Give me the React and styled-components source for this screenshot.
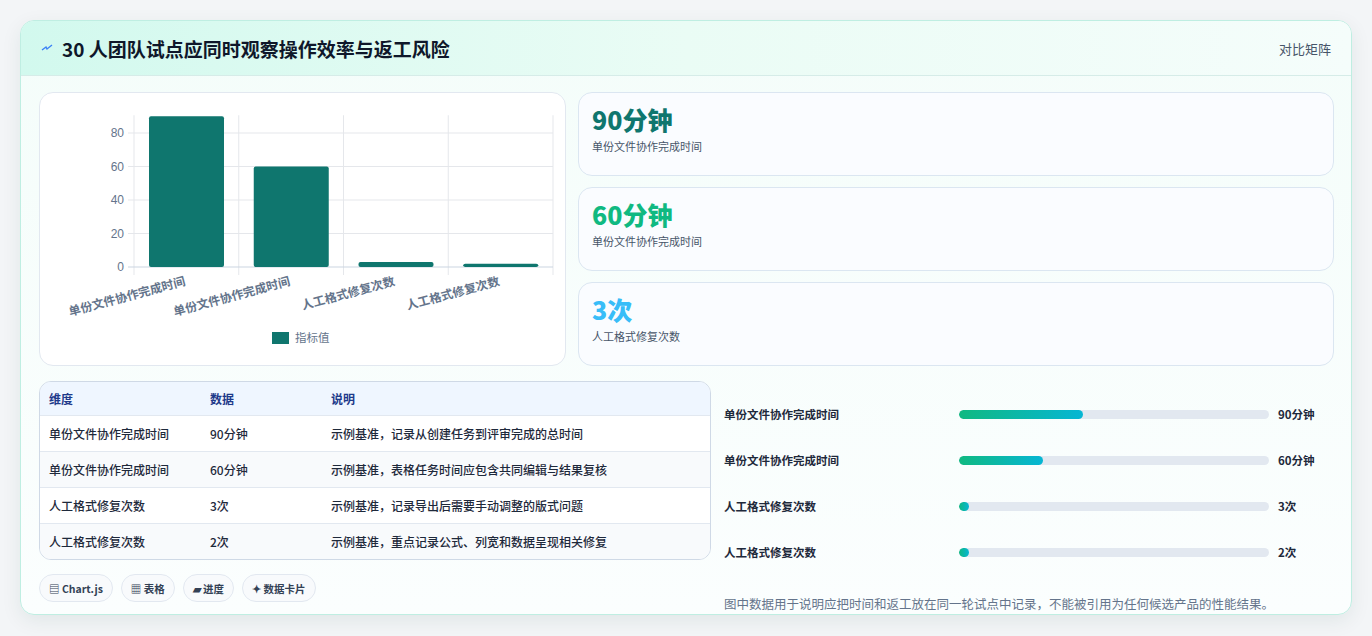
import React from "react";
import styled, { createGlobalStyle } from "styled-components";

const G = createGlobalStyle`
  body{margin:0;background:#f3f5f7;font-family:"Noto Sans CJK SC","Noto Sans",sans-serif;}
`;
const Page = styled.div`padding:20px 20px 21px 20px;width:1372px;box-sizing:border-box;`;
const Card = styled.div`
  width:1332px;height:595px;box-sizing:border-box;border:1px solid #bfeee2;border-radius:14px;
  background:linear-gradient(180deg,#f4fdfa,#fbfefe);overflow:hidden;box-shadow:0 6px 20px rgba(15,60,50,.08);
`;
const Head = styled.div`
  height:55px;box-sizing:border-box;display:flex;align-items:center;justify-content:space-between;
  padding:0 20px 0 20px;background:linear-gradient(90deg,#d2f9ee,#eafcf5 50%,#f5fdfb);border-bottom:1px solid #d6ece8;
`;
const Title = styled.h1`margin:0;font-size:19px;font-weight:700;color:#0f172a;display:flex;align-items:center;gap:9px;`;
const Side = styled.span`font-size:13px;color:#475569;`;
const Body = styled.div`padding:16px 18px 0 18px;display:flex;flex-direction:column;gap:15px;`;
const Top = styled.div`display:grid;grid-template-columns:527px 756px;gap:12px;`;
const ChartBox = styled.div`height:274px;box-sizing:border-box;border:1px solid #e2e8f0;border-radius:14px;background:#fff;`;
const Stats = styled.div`display:flex;flex-direction:column;gap:11px;`;
const Stat = styled.div`height:84px;box-sizing:border-box;border:1px solid #dbe6f1;border-radius:14px;background:#fafcff;padding:8px 13px;`;
const Big = styled.div`font-size:25px;font-weight:800;color:${p=>p.c};line-height:36px;`;
const Small = styled.div`font-size:11px;color:#475569;margin-top:1px;`;
const Bottom = styled.div`display:grid;grid-template-columns:672px 1fr;gap:13px;`;
const Left = styled.div`display:flex;flex-direction:column;gap:14px;`;
const Table = styled.div`border:1px solid #cfd9e6;border-radius:12px;overflow:hidden;background:#fff;`;
const Row = styled.div`
  display:grid;grid-template-columns:161px 121px 1fr;height:${p=>p.h?33:35}px;align-items:center;padding-left:9px;
  font-size:12px;color:${p=>p.h?"#1e3a8a":"#1e293b"};font-weight:${p=>p.h?600:500};
  background:${p=>p.h?"#eff6ff":p.alt?"#f8fafc":"#fff"};border-top:${p=>p.h?"none":"1px solid #e2e8f0"};
`;
const Chips = styled.div`display:flex;gap:8px;`;
const Chip = styled.span`height:28px;box-sizing:border-box;padding:0 9px;border:1px solid #e2e8f0;border-radius:14px;background:#f8fafc;font-size:10.5px;font-weight:600;color:#334155;display:flex;align-items:center;gap:3px;`;
const Right = styled.div`display:flex;flex-direction:column;padding-top:10px;`;
const PRow = styled.div`display:grid;grid-template-columns:226px 310px 1fr;align-items:center;height:46px;column-gap:9px;`;
const PLabel = styled.span`font-size:11.5px;font-weight:600;color:#1e293b;`;
const Track = styled.div`height:9px;border-radius:5px;background:#e2e8f0;overflow:hidden;`;
const Fill = styled.div`height:100%;border-radius:5px;background:linear-gradient(90deg,#10b981,#06b6d4);min-width:10px;`;
const PVal = styled.span`font-size:11.5px;font-weight:700;color:#1e293b;`;
const Note = styled.p`margin:19px 0 0;font-size:12.5px;color:#64748b;`;

const y = v => 266 - 92 - v * 1.675;
function Chart() {
  const x0 = 94, w = 104.75;
  const vals = [90, 60, 3, 2];
  const labels = ["单份文件协作完成时间","单份文件协作完成时间","人工格式修复次数","人工格式修复次数"];
  return (
    <svg width="525" height="272" style={{display:"block"}}>
      {[0,1,2,3,4].map(i=><line key={i} x1={x0+i*w} x2={x0+i*w} y1={y(90)-1} y2={y(0)+8} stroke="#e5e7eb"/>)}
      {[0,20,40,60,80].map(v=><g key={v}>
        <line x1={x0-6} x2={x0+4*w} y1={y(v)} y2={y(v)} stroke={v?"#e5e7eb":"#cbd5e1"}/>
        <text x={x0-10} y={y(v)+4} textAnchor="end" fontSize="12" fill="#64748b" fontFamily="Liberation Sans">{v}</text>
      </g>)}
      {vals.map((v,i)=><rect key={i} x={x0+i*w+15} y={y(v)} width={75} height={v*1.675} rx="2" fill="#0f766e"/>)}
      {labels.map((l,i)=><text key={i} transform={`translate(${x0+i*w+52},${y(0)+18}) rotate(-15)`} textAnchor="end" fontSize="12" fontWeight="600" fill="#64748b">{l}</text>)}
      <rect x="232" y="239" width="17" height="12" fill="#0f766e"/>
      <text x="255" y="249" fontSize="11.5" fill="#64748b">指标值</text>
    </svg>
  );
}

const rows = [
  ["单份文件协作完成时间","90分钟","示例基准，记录从创建任务到评审完成的总时间"],
  ["单份文件协作完成时间","60分钟","示例基准，表格任务时间应包含共同编辑与结果复核"],
  ["人工格式修复次数","3次","示例基准，记录导出后需要手动调整的版式问题"],
  ["人工格式修复次数","2次","示例基准，重点记录公式、列宽和数据呈现相关修复"],
];
const prog = [["单份文件协作完成时间",40,"90分钟"],["单份文件协作完成时间",27,"60分钟"],["人工格式修复次数",3,"3次"],["人工格式修复次数",2,"2次"]];

export default function App(){
  return (<Page><G/><Card>
    <Head>
      <Title><svg width="12" height="10" viewBox="0 0 12 10"><path d="M1 7 L5 4 L6 6 L11 2" stroke="#3b82f6" strokeWidth="1.4" fill="none"/></svg>30 人团队试点应同时观察操作效率与返工风险</Title>
      <Side>对比矩阵</Side>
    </Head>
    <Body>
      <Top>
        <ChartBox><Chart/></ChartBox>
        <Stats>
          <Stat><Big c="#0f766e">90分钟</Big><Small>单份文件协作完成时间</Small></Stat>
          <Stat><Big c="#10b981">60分钟</Big><Small>单份文件协作完成时间</Small></Stat>
          <Stat><Big c="#38bdf8">3次</Big><Small>人工格式修复次数</Small></Stat>
        </Stats>
      </Top>
      <Bottom>
        <Left>
          <Table>
            <Row h><span>维度</span><span>数据</span><span>说明</span></Row>
            {rows.map((r,i)=><Row key={i} alt={i%2===1}>{r.map((c,j)=><span key={j}>{c}</span>)}</Row>)}
          </Table>
          <Chips>
            <Chip>▤ Chart.js</Chip><Chip>▦ 表格</Chip><Chip>▰ 进度</Chip><Chip>✦ 数据卡片</Chip>
          </Chips>
        </Left>
        <Right>
          {prog.map((p,i)=><PRow key={i}><PLabel>{p[0]}</PLabel><Track><Fill style={{width:p[1]+"%"}}/></Track><PVal>{p[2]}</PVal></PRow>)}
          <Note>图中数据用于说明应把时间和返工放在同一轮试点中记录，不能被引用为任何候选产品的性能结果。</Note>
        </Right>
      </Bottom>
    </Body>
  </Card></Page>);
}
